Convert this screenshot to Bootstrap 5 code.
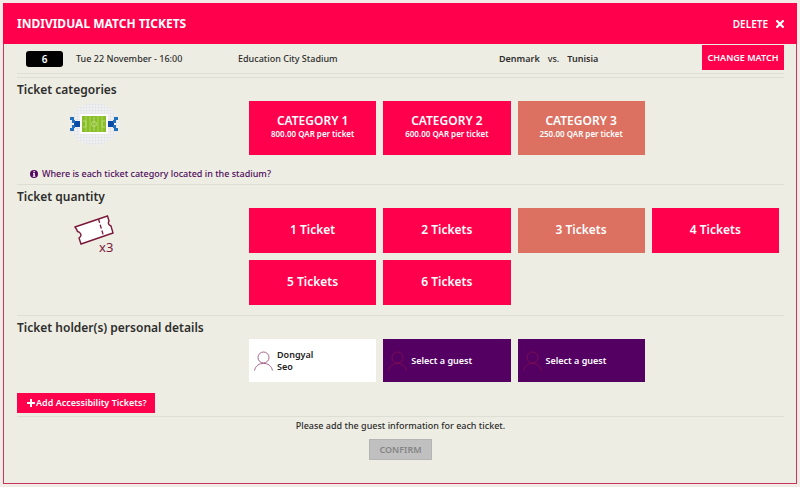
<!DOCTYPE html>
<html lang="en">
<head>
<meta charset="utf-8">
<meta name="viewport" content="width=device-width, initial-scale=1">
<title>Individual Match Tickets</title>
<link href="https://cdn.jsdelivr.net/npm/bootstrap@5.3.0/dist/css/bootstrap.min.css" rel="stylesheet">
<style>
body { background: #f3ece6; color: #2d2d2d; font: 9px/14px "Noto Sans", "Open Sans", sans-serif; padding: 3px; }
.ticket-panel { background: #eeede3; border: 1px solid #c9355f; padding-bottom: 23px; }
.panel-head { background: #ff004c; color: #fff; height: 41px; padding: 0 13px 0 14px; margin: -1px -1px 0; }
.panel-head h1 { font-size: 12px; font-weight: 700; line-height: 18px; }
.head-action { font-size: 10px; font-weight: 600; color: #fff; text-decoration: none; }
.panel-body { padding: 0 12px 0 13px; }
.match-line { display: grid; grid-template-columns: 59px 162px 261px 1fr 82px; align-items: center; height: 30px; border-bottom: 1px solid #dddfd5; margin-bottom: 3px; }
.match-no { background: #000; color: #fff; border-radius: 3px; width: 37px; height: 16px; line-height: 16px; font-size: 10px; font-weight: 600; margin-left: 9px; text-align: center; }
.match-text { font-weight: 500; }
.teams { font-weight: 600; }
.pink-btn { background: #ff004c; color: #fff; border: 0; border-radius: 0; font-weight: 600; line-height: 14px; }
.pink-btn:hover, .pink-btn:active { background: #dd003f; color: #fff; }
.chosen, .chosen:hover { background: #dd7161; }
.change-btn { font-size: 9px; height: 25px; padding: 0; margin-bottom: 2px; white-space: nowrap; }
.block { border-top: 1px solid #dddfd5; }
.block-grid { display: grid; grid-template-columns: 232px 1fr; }
.block h2 { font-size: 12px; font-weight: 600; line-height: 24px; margin: 0; white-space: nowrap; }
.choices { display: grid; grid-template-columns: repeat(4, 1fr); gap: 7px; padding: 23px 5px 0 0; }
.cat-btn { height: 54px; padding: 0 0 3px; font-size: 12px; }
.cat-btn span { display: block; font-size: 8px; line-height: 11px; }
.qty-btn { height: 45px; padding: 0 0 2px; font-size: 12px; }
.block-icon { width: 154px; }
.where-link { color: #4f0b5d; font-weight: 500; text-decoration: none; line-height: 14px; margin: 12px 0 3px 13px; }
.qty-block { padding-bottom: 10px; }
.guest-btn { height: 43px; padding: 0 5px; font-size: 9px; line-height: 12px; font-weight: 600; border: 0; border-radius: 0; background: #540062; color: #fff; stroke: #7b0d55; }
.guest-btn:hover { background: #43004f; color: #fff; }
.guest-set, .guest-set:hover { background: #fff; color: #222; stroke: #a5638a; }
.access-btn { font-size: 9px; height: 20px; padding: 0 8px 0 10px; margin: 11px 0 3px; gap: 1px; }
.foot-block { padding-top: 2px; }
.confirm-btn { font-size: 9px; font-weight: 600; line-height: 14px; border-radius: 0; height: 21px; width: 63px; padding: 0; margin-top: 6px; }
.confirm-btn:disabled { background: #c0c0c0; color: #858585; border-color: #b4b4b4; opacity: 1; }
</style>
<script src="https://cdn.jsdelivr.net/npm/bootstrap@5.3.0/dist/js/bootstrap.bundle.min.js"></script>
</head>
<body>
<main class="ticket-panel">
  <header class="panel-head d-flex align-items-center justify-content-between">
    <h1 class="m-0">INDIVIDUAL MATCH TICKETS</h1>
    <a href="#" class="head-action d-flex align-items-center">DELETE
      <svg class="ms-2" width="8" height="8" viewBox="0 0 8 8" stroke="#fff" stroke-width="2.200" aria-hidden="true"><path d="M.4.4l7.2 7.2M7.6.4L.4 7.6"/></svg>
    </a>
  </header>
  <div class="panel-body">
    <div class="match-line">
      <span class="match-no">6</span>
      <span class="match-text">Tue 22 November - 16:00</span>
      <span class="match-text">Education City Stadium</span>
      <span class="teams d-flex gap-2"><span>Denmark</span><span class="match-text">vs.</span><span>Tunisia</span></span>
      <button type="button" class="btn pink-btn change-btn">CHANGE MATCH</button>
    </div>

    <section class="block">
      <div class="block-grid">
        <div>
          <h2>Ticket categories</h2>
          <div class="block-icon d-flex justify-content-center">
            <svg width="50" height="44" viewBox="0 0 50 44" role="img" aria-label="Stadium map">
              <defs><pattern id="seats" width="3" height="3" patternUnits="userSpaceOnUse"><rect width="3" height="3" fill="#e6e7e9"/><rect width="2" height="2" fill="#f1f1f3"/></pattern></defs>
              <ellipse cx="25" cy="22" rx="25" ry="21" fill="url(#seats)"/>
              <rect x="11" y="12" width="28" height="20" fill="#fff"/>
              <rect x="13" y="14" width="24" height="16" fill="#8abd2c"/>
              <path d="M17 14v16M21 14v16M29 14v16M33 14v16" stroke="#9acb3d" stroke-width="2"/>
              <g fill="none" stroke="#c8e394" stroke-width=".7"><path d="M25 15v14M14 19h3v6h-3M36 19h-3v6h3"/><circle cx="25" cy="22" r="2.500"/></g>
              <path d="M5 19h6v6H5zM39 19h6v6h-6z" fill="#0b4ba6"/>
              <path d="M1 15h4v3H1zM3 18h3v3H3zM3 23h3v3H3zM1 26h4v3H1zM45 15h4v3h-4zM44 18h3v3h-3zM44 23h3v3h-3zM45 26h4v3h-4z" fill="#2270bd"/>
            </svg>
          </div>
        </div>
        <div class="choices">
          <button type="button" class="btn pink-btn cat-btn">CATEGORY 1<span>800.00 QAR per ticket</span></button>
          <button type="button" class="btn pink-btn cat-btn">CATEGORY 2<span>600.00 QAR per ticket</span></button>
          <button type="button" class="btn pink-btn cat-btn chosen" aria-pressed="true">CATEGORY 3<span>250.00 QAR per ticket</span></button>
        </div>
      </div>
      <a href="#" class="where-link d-flex align-items-center">
        <svg width="8" height="8" viewBox="0 0 8 8" aria-hidden="true"><circle cx="4" cy="4" r="4" fill="#4f0b5d"/><path d="M3.400 1h1.400v1.200H3.400zM3 3h1.800v2.800h.6v.9H2.800v-.9h.6V3.900H3z" fill="#fff"/></svg>
        <span class="ms-1">Where is each ticket category located in the stadium?</span>
      </a>
    </section>

    <section class="block qty-block">
      <div class="block-grid">
        <div>
          <h2>Ticket quantity</h2>
          <div class="block-icon d-flex justify-content-center">
            <svg width="48" height="50" viewBox="0 0 48 50" role="img" aria-label="3 tickets selected">
              <path d="M5 18L37.500 7l1.500 5q-2 3 2 5l2 7L11 35l-2-6q4-3 0-6-2 0-2-2z" fill="#fff" stroke="#7b193a" stroke-width="1.400"/>
              <path d="M28.500 10l5 17" stroke="#7b193a" stroke-width="1.300" stroke-dasharray="4 2"/>
              <text x="29" y="43" font-size="13" fill="#7b193a">x3</text>
            </svg>
          </div>
        </div>
        <div class="choices">
          <button type="button" class="btn pink-btn qty-btn">1 Ticket</button>
          <button type="button" class="btn pink-btn qty-btn">2 Tickets</button>
          <button type="button" class="btn pink-btn qty-btn chosen" aria-pressed="true">3 Tickets</button>
          <button type="button" class="btn pink-btn qty-btn">4 Tickets</button>
          <button type="button" class="btn pink-btn qty-btn">5 Tickets</button>
          <button type="button" class="btn pink-btn qty-btn">6 Tickets</button>
        </div>
      </div>
    </section>

    <section class="block">
      <div class="block-grid">
        <h2>Ticket holder(s) personal details</h2>
        <div class="choices">
          <button type="button" class="btn guest-btn guest-set d-flex align-items-center text-start">
            <svg class="me-1 flex-shrink-0" width="19" height="20" viewBox="0 0 19 20" fill="none" aria-hidden="true"><circle cx="9.500" cy="6.500" r="5.500"/><path d="M.6 19.500C2 10 17 10 18.400 19.500"/></svg>
            <span>Dongyal<br>Seo</span></button>
          <button type="button" class="btn guest-btn d-flex align-items-center text-start">
            <svg class="me-1 flex-shrink-0" width="19" height="20" viewBox="0 0 19 20" fill="none" aria-hidden="true"><circle cx="9.500" cy="6.500" r="5.500"/><path d="M.6 19.500C2 10 17 10 18.400 19.500"/></svg>
            <span>Select a guest</span></button>
          <button type="button" class="btn guest-btn d-flex align-items-center text-start">
            <svg class="me-1 flex-shrink-0" width="19" height="20" viewBox="0 0 19 20" fill="none" aria-hidden="true"><circle cx="9.500" cy="6.500" r="5.500"/><path d="M.6 19.500C2 10 17 10 18.400 19.500"/></svg>
            <span>Select a guest</span></button>
        </div>
      </div>
      <button type="button" class="btn pink-btn access-btn d-flex align-items-center">
        <svg width="8" height="8" viewBox="0 0 8 8" stroke="#fff" stroke-width="2" aria-hidden="true"><path d="M4 0v8M0 4h8"/></svg>
        Add Accessibility Tickets?</button>
    </section>

    <footer class="block foot-block text-center">
      <p class="m-0 match-text">Please add the guest information for each ticket.</p>
      <button type="button" class="btn confirm-btn" disabled>CONFIRM</button>
    </footer>
  </div>
</main>
</body>
</html>
